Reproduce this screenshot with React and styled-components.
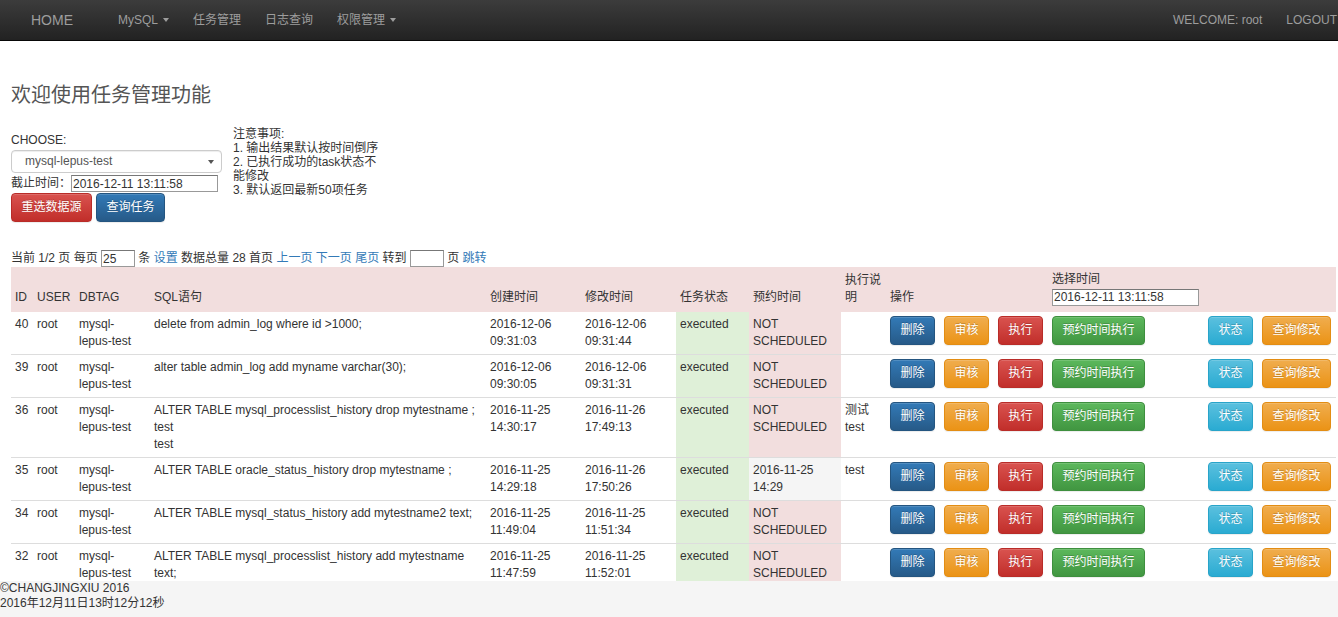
import React from 'react';
import styled, { createGlobalStyle, css } from 'styled-components';

const GlobalStyle = createGlobalStyle`
  html, body {
    margin: 0;
    padding: 0;
    background: #fff;
  }
  body {
    font-family: "Liberation Sans", Arial, "Noto Sans CJK SC", sans-serif;
    font-size: 12px;
    line-height: 17px;
    color: #333;
  }
  * { box-sizing: border-box; }
`;

const NavBar = styled.div`
  display: flex;
  align-items: center;
  height: 41px;
  padding-left: 16px;
  background: linear-gradient(to bottom, #3c3c3c 0%, #222 100%);
  border-bottom: 1px solid #080808;
`;

const Brand = styled.a`
  padding: 0 15px;
  margin-right: 18px;
  font-size: 14px;
  color: #9d9d9d;
  text-decoration: none;
`;

const NavItem = styled.a`
  display: flex;
  align-items: center;
  padding: 0 12px;
  font-size: 12px;
  color: #9d9d9d;
  text-decoration: none;
`;

const NavRight = styled.div`
  display: flex;
  margin-left: auto;
  margin-right: -11px;
`;

const Caret = styled.span`
  display: inline-block;
  width: 0;
  height: 0;
  margin-left: 5px;
  border-top: 4px solid ${props => props.color || '#9d9d9d'};
  border-left: 3px solid transparent;
  border-right: 3px solid transparent;
`;

const Main = styled.div`
  padding: 0 0 60px 11px;
`;

const Title = styled.h3`
  margin: 43px 0 0 0;
  font-size: 20px;
  line-height: 22px;
  font-weight: normal;
  color: #555;
`;

const Controls = styled.div`
  display: flex;
  align-items: flex-start;
  gap: 11px;
  margin-top: 21px;
`;

const ChooseCol = styled.div`
  width: 211px;
  padding-top: 5px;
`;

const SelectBox = styled.div`
  display: flex;
  align-items: center;
  justify-content: space-between;
  height: 23px;
  margin-top: 1px;
  padding: 0 7px 0 13px;
  border: 1px solid #ccc;
  border-radius: 4px;
  box-shadow: inset 0 1px 1px rgba(0, 0, 0, .075);
  color: #555;
`;

const DateRow = styled.div`
  display: flex;
  align-items: center;
  margin-top: 2px;
`;

const TextInput = styled.input`
  width: ${props => props.$w}px;
  height: 17px;
  padding: 0 1px;
  border: 1px solid #999;
  border-top-color: #777;
  font-family: inherit;
  font-size: 12px;
  color: #333;
  vertical-align: middle;
`;

const ButtonRow = styled.div`
  display: flex;
  gap: ${props => props.$gap}px;
  margin-top: ${props => props.$top || 0}px;
  white-space: nowrap;
`;

const variants = {
  primary: ['#337ab7', '#265a88', '#245580'],
  warning: ['#f0ad4e', '#eb9316', '#e38d13'],
  danger: ['#d9534f', '#c12e2a', '#b92c28'],
  success: ['#5cb85c', '#419641', '#3e8f3e'],
  info: ['#5bc0de', '#2aabd2', '#28a4c9'],
};

const Btn = styled.button`
  ${props => {
    const [from, to, border] = variants[props.$kind];
    return css`
      background-image: linear-gradient(to bottom, ${from} 0%, ${to} 100%);
      border: 1px solid ${border};
    `;
  }}
  padding: 5px 9.5px;
  font-family: inherit;
  font-size: 12px;
  line-height: 17px;
  color: #fff;
  border-radius: 4px;
  text-shadow: 0 -1px 0 rgba(0, 0, 0, .2);
  box-shadow: inset 0 1px 0 rgba(255, 255, 255, .15), 0 1px 1px rgba(0, 0, 0, .075);
  cursor: pointer;
`;

const Notes = styled.div`
  width: 150px;
  line-height: 14px;
  color: #333;
`;

const Pager = styled.div`
  margin-top: 27px;
  line-height: 18px;
  white-space: nowrap;

  a {
    color: #337ab7;
    text-decoration: none;
  }
`;

const Table = styled.table`
  width: 1325px;
  table-layout: fixed;
  border-collapse: collapse;
`;

const Th = styled.th`
  padding: 4px 4px 6px;
  text-align: left;
  font-weight: normal;
  vertical-align: bottom;
  background: #f2dede;
`;

const cellColors = {
  success: '#dff0d8',
  danger: '#f2dede',
  active: '#f5f5f5',
};

const Td = styled.td`
  padding: 4px;
  vertical-align: top;
  border-bottom: 1px solid #ddd;
  background: ${props => (props.$tone ? cellColors[props.$tone] : 'transparent')};
  white-space: ${props => (props.$pre ? 'pre-line' : 'normal')};
`;

const Footer = styled.div`
  position: fixed;
  left: 0;
  right: 0;
  bottom: 0;
  height: 36px;
  background: #f5f5f5;
  line-height: 15px;
  color: #333;
`;

const columns = [22, 42, 75, 336, 95, 95, 73, 92, 45, 162, 156, 132];

const tasks = [
  { id: 40, sql: 'delete from admin_log where id >1000;', created: '2016-12-06 09:31:03', modified: '2016-12-06 09:31:44', plan: 'NOT SCHEDULED', note: '' },
  { id: 39, sql: 'alter table admin_log add myname varchar(30);', created: '2016-12-06 09:30:05', modified: '2016-12-06 09:31:31', plan: 'NOT SCHEDULED', note: '' },
  { id: 36, sql: 'ALTER TABLE mysql_processlist_history drop mytestname ;\ntest\ntest', created: '2016-11-25 14:30:17', modified: '2016-11-26 17:49:13', plan: 'NOT SCHEDULED', note: '测试 test' },
  { id: 35, sql: 'ALTER TABLE oracle_status_history drop mytestname ;', created: '2016-11-25 14:29:18', modified: '2016-11-26 17:50:26', plan: '2016-11-25 14:29', note: 'test', scheduled: true },
  { id: 34, sql: 'ALTER TABLE mysql_status_history add mytestname2 text;', created: '2016-11-25 11:49:04', modified: '2016-11-25 11:51:34', plan: 'NOT SCHEDULED', note: '' },
  { id: 32, sql: 'ALTER TABLE mysql_processlist_history add mytestname text;', created: '2016-11-25 11:47:59', modified: '2016-11-25 11:52:01', plan: 'NOT SCHEDULED', note: '' },
];

function App() {
  return (
    <>
      <GlobalStyle />
      <NavBar>
        <Brand>HOME</Brand>
        <NavItem>MySQL<Caret /></NavItem>
        <NavItem>任务管理</NavItem>
        <NavItem>日志查询</NavItem>
        <NavItem>权限管理<Caret /></NavItem>
        <NavRight>
          <NavItem>WELCOME: root</NavItem>
          <NavItem>LOGOUT</NavItem>
        </NavRight>
      </NavBar>

      <Main>
        <Title>欢迎使用任务管理功能</Title>

        <Controls>
          <ChooseCol>
            <div>CHOOSE:</div>
            <SelectBox>
              <span>mysql-lepus-test</span>
              <Caret color="#555" />
            </SelectBox>
            <DateRow>
              截止时间：<TextInput $w={147} defaultValue="2016-12-11 13:11:58" />
            </DateRow>
            <ButtonRow $gap={4} $top={1}>
              <Btn $kind="danger">重选数据源</Btn>
              <Btn $kind="primary">查询任务</Btn>
            </ButtonRow>
          </ChooseCol>
          <Notes>
            注意事项:<br />
            1. 输出结果默认按时间倒序<br />
            2. 已执行成功的task状态不能修改<br />
            3. 默认返回最新50项任务
          </Notes>
        </Controls>

        <Pager>
          当前 1/2 页 每页 <TextInput $w={34} defaultValue="25" /> 条 <a>设置</a> 数据总量 28 首页 <a>上一页</a> <a>下一页</a> <a>尾页</a> 转到 <TextInput $w={34} defaultValue="" /> 页 <a>跳转</a>
        </Pager>

        <Table>
          <colgroup>
            {columns.map((w, i) => <col key={i} style={{ width: w }} />)}
          </colgroup>
          <thead>
            <tr>
              <Th>ID</Th>
              <Th>USER</Th>
              <Th>DBTAG</Th>
              <Th>SQL语句</Th>
              <Th>创建时间</Th>
              <Th>修改时间</Th>
              <Th>任务状态</Th>
              <Th>预约时间</Th>
              <Th>执行说明</Th>
              <Th>操作</Th>
              <Th>
                <div>选择时间</div>
                <TextInput $w={147} defaultValue="2016-12-11 13:11:58" />
              </Th>
              <Th />
            </tr>
          </thead>
          <tbody>
            {tasks.map(task => (
              <tr key={task.id}>
                <Td>{task.id}</Td>
                <Td>root</Td>
                <Td>mysql-lepus-test</Td>
                <Td $pre>{task.sql}</Td>
                <Td>{task.created}</Td>
                <Td>{task.modified}</Td>
                <Td $tone="success">executed</Td>
                <Td $tone={task.scheduled ? 'active' : 'danger'}>{task.plan}</Td>
                <Td>{task.note}</Td>
                <Td>
                  <ButtonRow $gap={9}>
                    <Btn $kind="primary">删除</Btn>
                    <Btn $kind="warning">审核</Btn>
                    <Btn $kind="danger">执行</Btn>
                  </ButtonRow>
                </Td>
                <Td>
                  <Btn $kind="success">预约时间执行</Btn>
                </Td>
                <Td>
                  <ButtonRow $gap={9}>
                    <Btn $kind="info">状态</Btn>
                    <Btn $kind="warning">查询修改</Btn>
                  </ButtonRow>
                </Td>
              </tr>
            ))}
          </tbody>
        </Table>
      </Main>

      <Footer>
        <div>©CHANGJINGXIU 2016</div>
        <div>2016年12月11日13时12分12秒</div>
      </Footer>
    </>
  );
}

export default App;
